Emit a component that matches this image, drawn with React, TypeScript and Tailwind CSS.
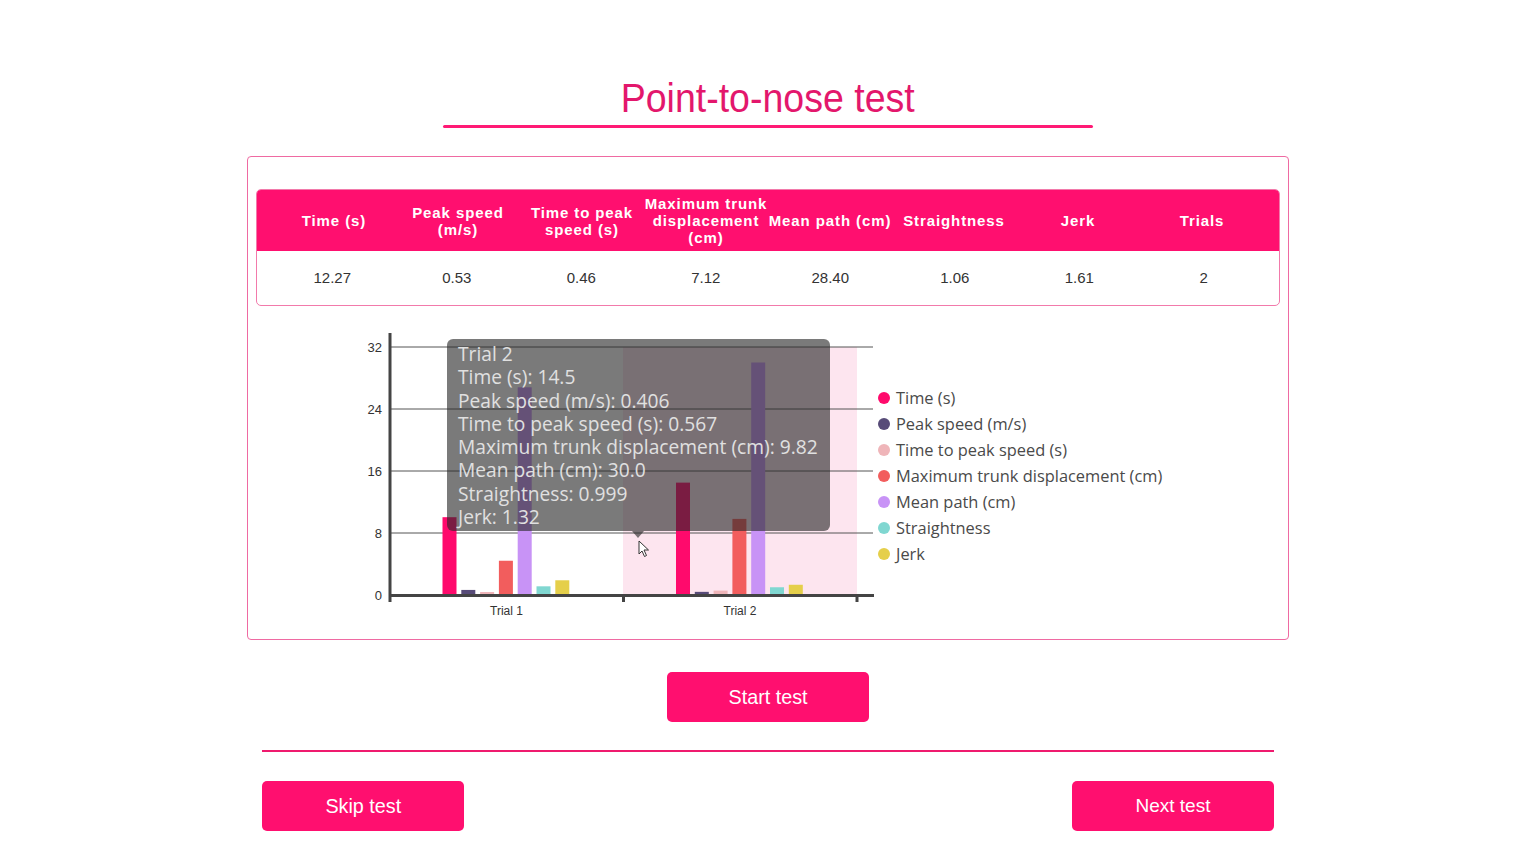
import React from "react";

const pink = "#ff0f6f";

const series = [
  { name: "Time (s)", color: "#ff0a6c", t1: 10.04, t2: 14.5 },
  { name: "Peak speed (m/s)", color: "#574b78", t1: 0.654, t2: 0.406 },
  { name: "Time to peak speed (s)", color: "#efb5b9", t1: 0.353, t2: 0.567 },
  { name: "Maximum trunk displacement (cm)", color: "#f25d5d", t1: 4.42, t2: 9.82 },
  { name: "Mean path (cm)", color: "#c893f6", t1: 26.8, t2: 30.0 },
  { name: "Straightness", color: "#80d7d1", t1: 1.12, t2: 0.999 },
  { name: "Jerk", color: "#e5cf4a", t1: 1.9, t2: 1.32 },
];

const columns = [
  { head: ["Time (s)"], value: "12.27" },
  { head: ["Peak speed", "(m/s)"], value: "0.53" },
  { head: ["Time to peak", "speed (s)"], value: "0.46" },
  { head: ["Maximum trunk", "displacement", "(cm)"], value: "7.12" },
  { head: ["Mean path (cm)"], value: "28.40" },
  { head: ["Straightness"], value: "1.06" },
  { head: ["Jerk"], value: "1.61" },
  { head: ["Trials"], value: "2" },
];

const tooltipLines = [
  "Trial 2",
  "Time (s): 14.5",
  "Peak speed (m/s): 0.406",
  "Time to peak speed (s): 0.567",
  "Maximum trunk displacement (cm): 9.82",
  "Mean path (cm): 30.0",
  "Straightness: 0.999",
  "Jerk: 1.32",
];

function Chart() {
  const zero = 270;
  const scale = 7.75;
  const ticks = [0, 8, 16, 24, 32];
  return (
    <svg width="530" height="295" className="block">
      <rect x="273" y="22" width="234" height="248" fill="#fde5ef" />
      {ticks.map((t) => (
        <g key={t}>
          <line x1="40" x2="523" y1={zero - t * scale} y2={zero - t * scale} stroke="#555" strokeWidth="1" />
          <text
            x="32"
            y={zero - t * scale + 4.5}
            textAnchor="end"
            fontSize="13"
            fill="#333"
            fontFamily="'Liberation Sans', Arial, sans-serif"
          >
            {t}
          </text>
        </g>
      ))}
      {[0, 1].map((trial) =>
        series.map((s, j) => {
          const v = trial === 0 ? s.t1 : s.t2;
          const h = Math.max(v * scale, 3);
          const x = 40 + trial * 233.5 + 52.5 + j * 18.8;
          return <rect key={trial + s.name} x={x} y={zero - h} width="14" height={h} fill={s.color} />;
        })
      )}
      <line x1="40" x2="40" y1="8" y2="277" stroke="#444" strokeWidth="3" />
      <line x1="39" x2="524" y1="270.5" y2="270.5" stroke="#444" strokeWidth="3" />
      <line x1="273.5" x2="273.5" y1="270" y2="277" stroke="#444" strokeWidth="3" />
      <line x1="507" x2="507" y1="270" y2="277" stroke="#444" strokeWidth="3" />
      <text x="156.5" y="290" textAnchor="middle" fontSize="12" fill="#333" fontFamily="'Liberation Sans', Arial, sans-serif">
        Trial 1
      </text>
      <text x="390" y="290" textAnchor="middle" fontSize="12" fill="#333" fontFamily="'Liberation Sans', Arial, sans-serif">
        Trial 2
      </text>
    </svg>
  );
}

export default function App() {
  return (
    <div className="min-h-[861px] w-full bg-white flex flex-col items-center">
      <h1 className="mt-[74px] text-[41px] leading-[48px] scale-x-[0.915] text-[#e3176c] font-['Liberation_Sans',Arial,sans-serif]">
        Point-to-nose test
      </h1>
      <div className="mt-[3px] h-[3px] w-[650px] rounded-full bg-[#ff1a75]" />

      <div className="mt-[28px] w-[1042px] h-[484px] border border-[#ef6aa2] rounded-[4px] px-[8px] pt-[32px]">
        <div className="rounded-[5px] border border-[#f27aab] overflow-hidden font-['Liberation_Sans',Arial,sans-serif]">
          <div className="grid grid-cols-8 px-[15px] h-[61px] items-center bg-[#ff0f6f] text-white text-[15px] font-bold leading-[17px] tracking-[0.06em]">
            {columns.map((c) => (
              <div key={c.value + c.head[0]} className="text-center">
                {c.head.map((l) => (
                  <div key={l}>{l}</div>
                ))}
              </div>
            ))}
          </div>
          <div className="grid grid-cols-8 px-[13px] h-[54px] items-center text-[15px] text-[#333]">
            {columns.map((c) => (
              <div key={c.head[0]} className="text-center">
                {c.value}
              </div>
            ))}
          </div>
        </div>

        <div className="mt-[19px] ml-[94px] flex items-center">
          <div className="relative">
            <Chart />
            <div className="absolute left-[97px] top-[14px] w-[383px] h-[192px] rounded-[6px] bg-[rgba(40,40,40,0.62)] pl-[11px] pt-[3px] text-[19.2px] leading-[23.3px] text-[#e0e0e0] font-['Open_Sans',sans-serif] whitespace-nowrap">
              {tooltipLines.map((l) => (
                <div key={l}>{l}</div>
              ))}
            </div>
            <div className="absolute left-[282px] top-[206px] w-0 h-0 border-l-[6px] border-r-[6px] border-t-[7px] border-l-transparent border-r-transparent border-t-[rgba(40,40,40,0.62)]" />
            <svg className="absolute left-[288px] top-[215px]" width="12" height="18" viewBox="0 0 12 18">
              <path d="M1 1 L1 14 L4 11 L6.5 16.5 L8.5 15.5 L6 10 L10.5 10 Z" fill="#fff" stroke="#333" strokeWidth="1" strokeLinejoin="round" />
            </svg>
          </div>
          <div className="flex flex-col gap-[4px] ml-[-2px] mt-[6px] font-['Open_Sans',sans-serif] text-[16.4px] leading-[22px] text-[#4a4a4a]">
            {series.map((s) => (
              <div key={s.name} className="flex items-center gap-[6px]">
                <span className="w-[12px] h-[12px] rounded-full" style={{ backgroundColor: s.color }} />
                <span>{s.name}</span>
              </div>
            ))}
          </div>
        </div>
      </div>

      <button
        className="mt-[32px] w-[202px] h-[50px] rounded-[5px] text-white text-[21px] font-['Liberation_Sans',Arial,sans-serif]"
        style={{ backgroundColor: pink }}
      >
        <span className="inline-block scale-x-[0.94]">Start test</span>
      </button>
      <div className="mt-[28px] h-[2px] w-[1012px] bg-[#ef1a6e]" />
      <div className="mt-[29px] w-[1012px] flex justify-between">
        <button className="w-[202px] h-[50px] rounded-[5px] bg-[#ff0f6f] text-white text-[21px] font-['Liberation_Sans',Arial,sans-serif]">
          <span className="inline-block scale-x-[0.94]">Skip test</span>
        </button>
        <button className="w-[202px] h-[50px] rounded-[5px] bg-[#ff0f6f] text-white text-[19px] font-['Liberation_Sans',Arial,sans-serif]">
          Next test
        </button>
      </div>
    </div>
  );
}
